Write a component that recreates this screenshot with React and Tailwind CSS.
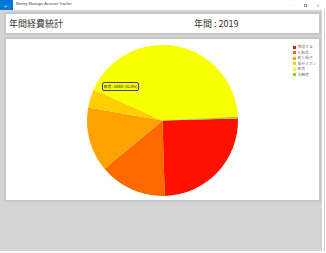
import React from "react";

const CX = 156.5;
const CY = 81.5;
const R = 75.5;

const slices = [
  { from: -1.5, to: 88.3, color: "#ff1100" },
  { from: 88.3, to: 140.2, color: "#ff6a00" },
  { from: 140.2, to: 190.0, color: "#ffa200" },
  { from: 190.0, to: 204.3, color: "#ffcf00" },
  { from: 204.3, to: 357.2, color: "#f8ff00" },
  { from: 357.2, to: 358.5, color: "#9acd32" },
];

function arc(from, to) {
  const a1 = (from * Math.PI) / 180;
  const a2 = (to * Math.PI) / 180;
  const x1 = CX + R * Math.cos(a1);
  const y1 = CY + R * Math.sin(a1);
  const x2 = CX + R * Math.cos(a2);
  const y2 = CY + R * Math.sin(a2);
  const large = to - from > 180 ? 1 : 0;
  return `M${CX} ${CY} L${x1} ${y1} A${R} ${R} 0 ${large} 1 ${x2} ${y2} Z`;
}

const legend = [
  { label: "修理する", color: "#ff1100" },
  { label: "化粧品", color: "#ff6a00" },
  { label: "靴と帽子", color: "#ffa200" },
  { label: "服やズボン", color: "#ffcf00" },
  { label: "家賃", color: "#f8ff00" },
  { label: "光熱費", color: "#9acd32" },
];

export default function App() {
  return (
    <div
      className="w-[326px] h-[253px] bg-white flex flex-col overflow-hidden"
      style={{ fontFamily: '"Noto Sans CJK JP", "Liberation Sans", sans-serif' }}
    >
      {/* title bar */}
      <div className="h-[10px] flex items-center bg-white">
        <div className="w-[13px] h-[10px] bg-[#0078d7] flex items-center justify-center text-white text-[5px] leading-none">
          ←
        </div>
        <div
          className="ml-[3px] text-[3.8px] leading-none text-[#444]"
          style={{ fontFamily: '"Liberation Sans", sans-serif' }}
        >
          Money Manager Account Tracker
        </div>
        <div className="ml-auto flex items-center text-[#999] text-[4px] leading-none pr-[2px]">
          <span className="w-[14px] text-center">–</span>
          <span className="w-[14px] flex justify-center">
            <span className="block w-[3px] h-[3px] border-[0.6px] border-[#999]"></span>
          </span>
          <span className="w-[12px] text-center text-[4.5px]">×</span>
        </div>
      </div>

      <div className="flex h-[241px] w-[325px] border-r border-[#cccccc] pr-[2px]">
        <div className="w-[322px] h-full bg-[#d4d4d4] px-[4px] pt-[2px] flex flex-col gap-[2px]">
          {/* header card */}
          <div className="h-[23px] w-[317px] border-2 border-[#c6c6c6] bg-white flex items-center text-[9px] leading-none text-[#333]">
            <span className="pl-[3px] w-[188px]">年間経費統計</span>
            <span>年間 : 2019</span>
          </div>
          {/* chart card */}
          <div className="relative h-[165px] w-[317px] border-2 border-[#c6c6c6] bg-white">
            <svg width="313" height="161" className="block">
              {slices.map((s, i) => (
                <path key={i} d={arc(s.from, s.to)} fill={s.color} />
              ))}
            </svg>
            <div className="absolute left-[287px] top-[6px] flex flex-col gap-[1.5px]">
              {legend.map((l) => (
                <div key={l.label} className="flex items-center h-[4px]">
                  <span className="w-[3px] h-[3px]" style={{ background: l.color }}></span>
                  <span className="ml-[1.5px] text-[3.8px] leading-none text-[#777]">{l.label}</span>
                </div>
              ))}
            </div>
            <div className="absolute left-[96px] top-[43px] h-[9px] w-[37px] rounded-[2px] border border-[#444] flex items-center justify-center text-[3.6px] leading-none text-[#222] whitespace-nowrap">
              家賃 : 50000 (42.4%)
            </div>
          </div>
        </div>
      </div>
    </div>
  );
}
